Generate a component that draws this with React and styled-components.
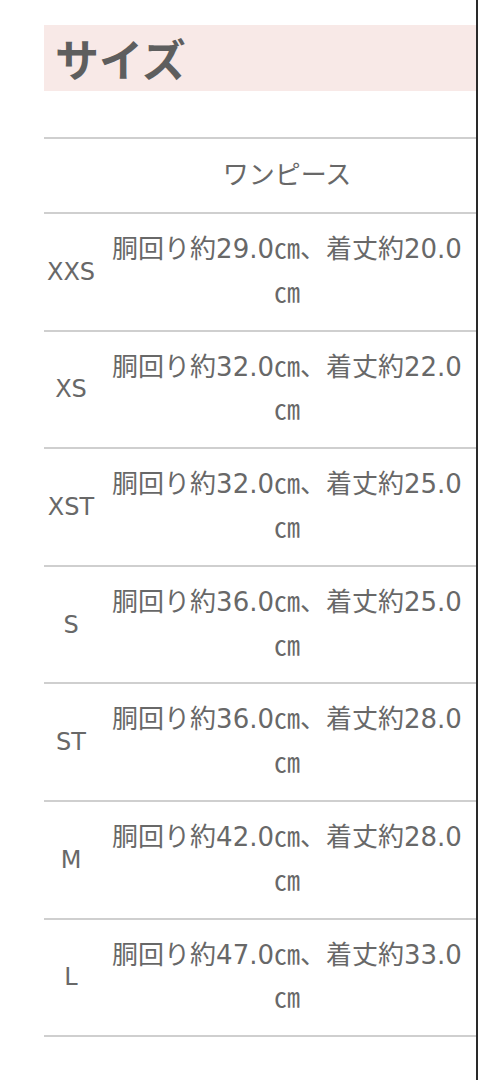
import React from "react";
import styled, { createGlobalStyle } from "styled-components";

const Global = createGlobalStyle`
  html, body { margin: 0; padding: 0; background: #fff; }
  body { font-family: "DejaVu Sans", "Noto Sans CJK JP", sans-serif; }
`;

const Page = styled.div`
  box-sizing: border-box;
  width: 478px;
  min-height: 1080px;
  padding: 25px 0 0 44px;
  border-right: 2px solid #2a2a2a;
  overflow: hidden;
`;

const Title = styled.h2`
  margin: 0;
  height: 66px;
  display: flex;
  align-items: center;
  padding-left: 11px;
  background: #f8e9e7;
  color: #5e5e5e;
  font-family: "Noto Sans CJK JP", sans-serif;
  font-weight: 700;
  font-size: 44px;
  line-height: 1;
`;

const Table = styled.table`
  margin-top: 46px;
  width: 432px;
  border-collapse: collapse;
  table-layout: fixed;
  color: #686868;
  border-top: 2px solid #cfcfcf;
`;

const Row = styled.tr`
  border-bottom: 2px solid #cfcfcf;
`;

const Label = styled.td`
  width: 54px;
  padding: 0;
  text-align: center;
  vertical-align: middle;
  font-size: 24px;
  white-space: nowrap;
`;

const Cell = styled.td`
  padding: 14px 9px;
  text-align: center;
  vertical-align: middle;
  font-size: 26px;
  line-height: ${(p) => (p.$head ? "45px" : "43.8px")};
`;

const rows = [
  ["XXS", "29.0", "20.0"],
  ["XS", "32.0", "22.0"],
  ["XST", "32.0", "25.0"],
  ["S", "36.0", "25.0"],
  ["ST", "36.0", "28.0"],
  ["M", "42.0", "28.0"],
  ["L", "47.0", "33.0"],
];

export default function App() {
  return (
    <>
      <Global />
      <Page>
        <Title>サイズ</Title>
        <Table>
          <colgroup>
            <col style={{ width: 54 }} />
            <col />
          </colgroup>
          <tbody>
            <Row>
              <Label />
              <Cell $head>ワンピース</Cell>
            </Row>
            {rows.map(([s, w, l]) => (
              <Row key={s}>
                <Label>{s}</Label>
                <Cell>{`胴回り約${w}㎝、着丈約${l}㎝`}</Cell>
              </Row>
            ))}
          </tbody>
        </Table>
      </Page>
    </>
  );
}
